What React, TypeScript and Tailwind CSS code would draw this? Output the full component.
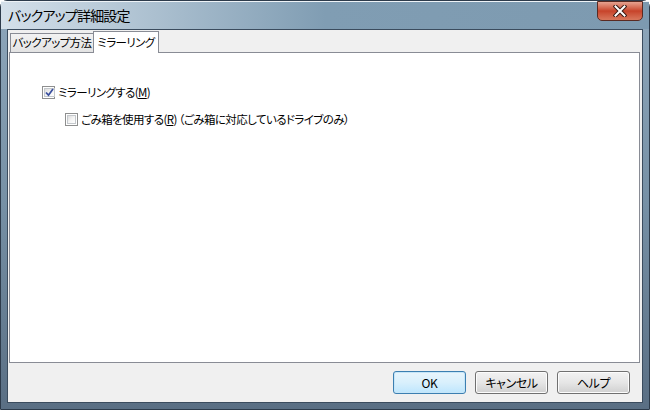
import React, { useState } from "react";

const JP = "font-['Noto_Sans_CJK_JP','Noto_Sans',sans-serif] [font-feature-settings:'palt']";

type CheckProps = {
  checked: boolean;
  onToggle: () => void;
  children: React.ReactNode;
};

// Windows 7 風のチェックボックス
const CheckBox = ({ checked, onToggle, children }: CheckProps) => (
  <label className="flex items-center gap-[3px] cursor-default select-none" onClick={onToggle}>
    <span className="w-[13px] h-[13px] border border-[#8e8f8f] bg-white p-[1px] flex">
      <span className="flex-1 border border-[#c4c8cc] bg-gradient-to-br from-[#dcdcdc] via-[#f4f4f4] to-white flex items-center justify-center">
        {checked && (
          <svg width="9" height="9" viewBox="0 0 9 9">
            <path d="M1 4.5 L3.5 7.2 L8 1" stroke="#3a4f9e" strokeWidth="1.8" fill="none" />
          </svg>
        )}
      </span>
    </span>
    <span className="text-[11.5px] leading-[14px] tracking-[-0.6px] text-black whitespace-nowrap">{children}</span>
  </label>
);

const WinButton = ({ label, primary }: { label: string; primary?: boolean }) => (
  <button
    className={`w-[73px] h-[23px] rounded-[3px] border text-[12px] leading-none tracking-[-0.4px] text-black ${
      primary
        ? "border-[#3c7fb1] bg-gradient-to-b from-[#e8f5fc] via-[#d9f0fc] to-[#bee6fd] shadow-[inset_0_0_0_1px_#c6e6f8]"
        : "border-[#707070] bg-gradient-to-b from-[#f2f2f2] via-[#e6e6e6] to-[#d0d0d0] shadow-[inset_0_0_0_1px_#fcfcfc]"
    }`}
  >
    {label}
  </button>
);

const App = () => {
  const [tab, setTab] = useState(1);
  const [mirror, setMirror] = useState(true);
  const [trash, setTrash] = useState(false);

  return (
    <div className={`w-[650px] h-[410px] overflow-hidden ${JP}`}>
      <div className="w-full h-full flex flex-col rounded-t-[7px] border border-[#2d3b4b] bg-gradient-to-b from-[#8fa7bb] via-[#7690a5] to-[#5a6f84] px-[6px] pb-[6px]">
        {/* タイトルバー */}
        <div className="h-[28px] flex items-start justify-between bg-gradient-to-r from-[#d4e0ea] via-[#809db3] to-[#7d9ab0] -mx-[6px] px-[7px] border-t border-[#eef3f7]">
          <span className="text-[14px] leading-[26px] tracking-[-0.8px] text-black">バックアップ詳細設定</span>
          <div className="mt-[-1px] mr-[-1px] w-[46px] h-[20px] rounded-b-[5px] border border-[#5a2a22] bg-gradient-to-b from-[#e5a290] via-[#c7432a] to-[#d8775c] flex items-center justify-center">
            <svg width="14" height="12" viewBox="0 0 14 12">
              <path d="M2.5 1.5 L11.5 10.5 M11.5 1.5 L2.5 10.5" stroke="#3a1a14" strokeWidth="4" strokeLinecap="square" />
              <path d="M2.5 1.5 L11.5 10.5 M11.5 1.5 L2.5 10.5" stroke="#ffffff" strokeWidth="2" strokeLinecap="square" />
            </svg>
          </div>
        </div>

        {/* クライアント領域 */}
        <div className="flex-1 flex flex-col border border-[#3b4c5e] bg-[#f0f0f0] pl-[1px] pr-[2px]">
          {/* タブ */}
          <div className="flex items-end h-[22px] pl-[1px] text-[11.5px] leading-none tracking-[-0.6px] whitespace-nowrap">
            <button
              onClick={() => setTab(0)}
              className={`w-[84px] border border-b-0 border-[#898c95] -mr-[1px] ${
                tab === 0
                  ? "h-[22px] bg-white relative z-10 -mb-[1px] pb-[1px]"
                  : "h-[19px] bg-gradient-to-b from-[#f2f2f2] to-[#e3e3e3]"
              }`}
            >
              バックアップ方法
            </button>
            <button
              onClick={() => setTab(1)}
              className={`w-[66px] border border-b-0 border-[#898c95] ${
                tab === 1
                  ? "h-[22px] bg-white relative z-10 -mb-[1px]"
                  : "h-[19px] bg-gradient-to-b from-[#f2f2f2] to-[#e3e3e3]"
              }`}
            >
              ミラーリング
            </button>
          </div>

          {/* タブパネル */}
          <div className="h-[311px] border border-[#898c95] bg-white pt-[32px] pl-[32px]">
            {tab === 1 ? (
              <div className="flex flex-col gap-[13px]">
                <CheckBox checked={mirror} onToggle={() => setMirror(!mirror)}>
                  ミラーリングする(<span className="underline">M</span>)
                </CheckBox>
                <div className="pl-[23px]">
                  <CheckBox checked={trash} onToggle={() => setTrash(!trash)}>
                    ごみ箱を使用する(<span className="underline">R</span>) （ごみ箱に対応しているドライブのみ）
                  </CheckBox>
                </div>
              </div>
            ) : null}
          </div>

          {/* ボタン */}
          <div className="flex-1 flex items-center justify-end gap-[9px] pr-[10px]">
            <WinButton label="OK" primary />
            <WinButton label="キャンセル" />
            <WinButton label="ヘルプ" />
          </div>
        </div>
      </div>
    </div>
  );
};

export default App;
